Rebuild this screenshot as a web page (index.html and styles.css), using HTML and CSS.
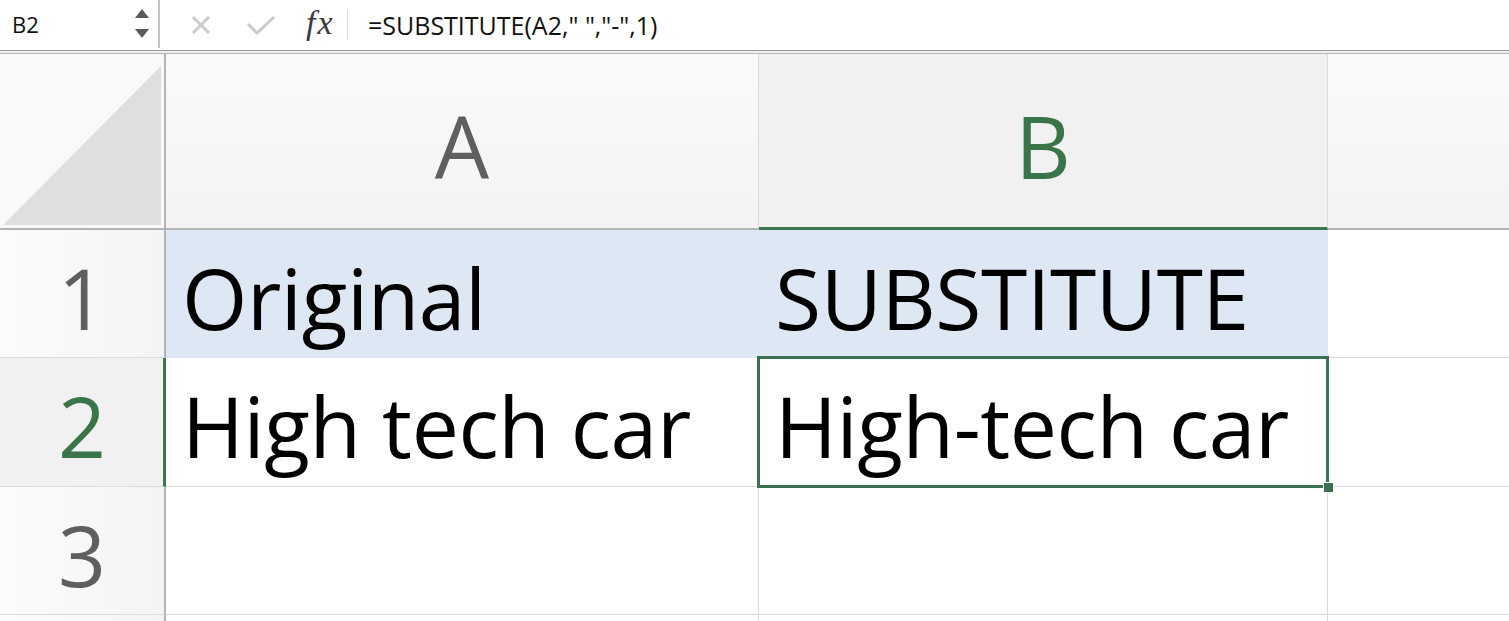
FILE: index.html
```html
<!DOCTYPE html>
<html>
<head>
<meta charset="utf-8">
<link rel="stylesheet" href="styles.css">
</head>
<body>
<div class="formula-bar">
  <div class="namebox">
    <span class="name">B2</span>
    <span class="spinner">
      <svg width="16" height="32" viewBox="0 0 16 32"><polygon points="8,1 15,10 1,10" fill="#5a5a5a"/><polygon points="1,21 15,21 8,30" fill="#5a5a5a"/></svg>
    </span>
  </div>
  <div class="fx-tools">
    <svg class="ico-x" width="22" height="22" viewBox="0 0 22 22"><path d="M3 3 L19 19 M19 3 L3 19" stroke="#cbcbcb" stroke-width="3" fill="none"/></svg>
    <svg class="ico-check" width="30" height="22" viewBox="0 0 30 22"><path d="M2 10 L11 19 L28 3" stroke="#cbcbcb" stroke-width="3" fill="none"/></svg>
    <span class="fx">fx</span>
    <span class="sep"></span>
  </div>
  <div class="formula">=SUBSTITUTE(A2," ","-",1)</div>
</div>
<div class="bar-rule"></div>
<div class="sheet">
  <div class="corner">
    <svg width="164" height="176" viewBox="0 0 164 176"><polygon points="161,12 161,171 3,171" fill="#dfdfdf"/></svg>
  </div>
  <div class="col-head">A</div>
  <div class="col-head col-sel">B</div>
  <div class="col-head col-rest"></div>

  <div class="row-head">1</div>
  <div class="cell fill">Original</div>
  <div class="cell fill">SUBSTITUTE</div>
  <div class="cell cell-rest"></div>

  <div class="row-head row-sel">2</div>
  <div class="cell">High tech car</div>
  <div class="cell active">High-tech car<span class="selbox"></span><span class="handle"></span></div>
  <div class="cell cell-rest"></div>

  <div class="row-head">3</div>
  <div class="cell"></div>
  <div class="cell"></div>
  <div class="cell cell-rest"></div>

  <div class="row-head row-last"></div>
  <div class="cell"></div>
  <div class="cell"></div>
  <div class="cell cell-rest"></div>
</div>
</body>
</html>
```

FILE: styles.css
```css
html, body {
  margin: 0;
  padding: 0;
  background: #ffffff;
  overflow: hidden;
}
body {
  width: 1509px;
  height: 621px;
  font-family: "Open Sans", "Liberation Sans", sans-serif;
}
.formula-bar {
  height: 50px;
  display: flex;
  align-items: stretch;
  background: #ffffff;
}
.namebox {
  width: 160px;
  display: flex;
  align-items: center;
  justify-content: space-between;
  border-right: 2px solid #c4c4c4;
  padding-left: 12px;
  padding-right: 8px;
  box-sizing: border-box;
  margin-bottom: 2px;
}
.name {
  font-size: 22px;
  color: #111;
}
.spinner {
  display: flex;
  align-items: center;
}
.fx-tools {
  display: flex;
  align-items: center;
  padding-left: 30px;
  width: 208px;
  box-sizing: border-box;
}
.ico-x { margin-right: 34px; }
.ico-check { margin-right: 30px; }
.fx {
  font-family: "Liberation Serif", "DejaVu Serif", serif;
  font-style: italic;
  font-size: 34px;
  letter-spacing: 2px;
  color: #3a3a3a;
  margin-right: 12px;
  margin-top: -5px;
}
.sep {
  width: 1px;
  height: 30px;
  background: #dcdcdc;
}
.formula {
  display: flex;
  align-items: center;
  font-size: 25px;
  color: #111;
}
.bar-rule {
  height: 2px;
  border-top: 1px solid #9c9c9c;
  border-bottom: 1px solid #b9b9b9;
  background: #eeeeee;
}
.sheet {
  display: grid;
  grid-template-columns: 166px 593px 569px 1fr;
  grid-template-rows: 176px 128px 129px 128px 1fr;
  height: 567px;
}
.corner {
  background: #f9f9f9;
  border-right: 2px solid #b4b4b4;
  border-bottom: 2px solid #b4b4b4;
  overflow: hidden;
}
.corner svg { display: block; }
.col-head {
  background: linear-gradient(to bottom, #fafafa, #f3f3f3);
  border-right: 1px solid #dcdcdc;
  border-bottom: 2px solid #b4b4b4;
  font-size: 86px;
  color: #5f5f5f;
  display: flex;
  align-items: center;
  justify-content: center;
  padding-top: 10px;
  box-sizing: border-box;
  line-height: 1;
}
.col-sel {
  background: #f1f1f1;
  color: #3a7549;
  border-bottom: 3px solid #3b7650;
}
.col-rest { border-right: none; }
.row-head {
  background: linear-gradient(to right, #fbfbfb, #f4f4f4);
  border-right: 2px solid #b4b4b4;
  border-bottom: 1px solid #dcdcdc;
  font-size: 84px;
  color: #5f5f5f;
  display: flex;
  align-items: center;
  justify-content: center;
  line-height: 1;
  box-sizing: border-box;
  padding-top: 8px;
}
.row-sel {
  background: #f1f1f1;
  color: #3a7549;
  border-right: 3px solid #3b7650;
  padding-left: 1px;
}
.row-last { border-bottom: none; }
.cell {
  border-right: 1px solid #d9d9d9;
  border-bottom: 1px solid #d9d9d9;
  font-size: 84px;
  letter-spacing: -0.4px;
  color: #000;
  display: flex;
  align-items: center;
  padding-left: 16px;
  padding-top: 8px;
  box-sizing: border-box;
  line-height: 1;
  white-space: nowrap;
  position: relative;
}
.fill {
  background: #dee8f4;
  border-right-color: #dee8f4;
  border-bottom-color: #dee8f4;
}
.cell-rest { border-right: none; }
.active {
  overflow: visible;
  z-index: 2;
}
.selbox {
  position: absolute;
  left: -2px;
  top: -2px;
  right: -2px;
  bottom: -2px;
  border: 3px solid #3b7050;
  pointer-events: none;
}
.handle {
  position: absolute;
  right: -7px;
  bottom: -7px;
  width: 9px;
  height: 9px;
  background: #3b7050;
  border: 1px solid #fff;
}
```
